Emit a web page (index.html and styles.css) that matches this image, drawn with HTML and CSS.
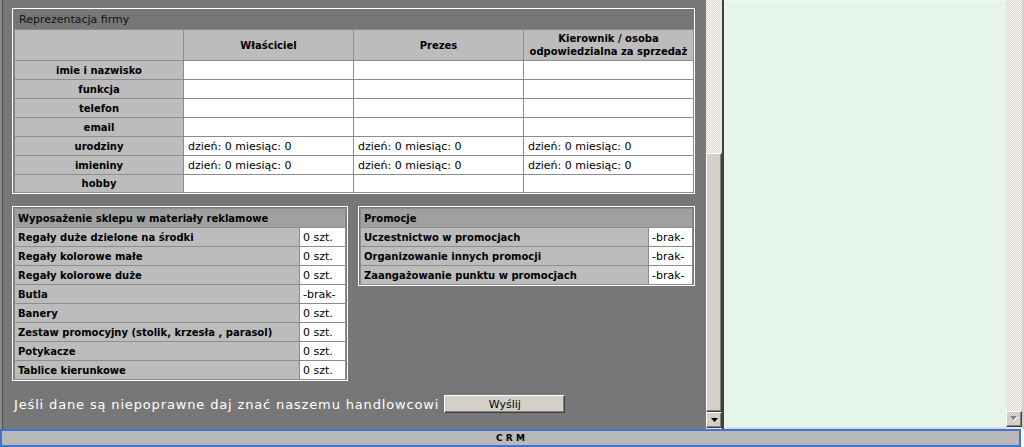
FILE: index.html
```html
<!DOCTYPE html>
<html lang="pl">
<head>
<meta charset="utf-8">
<title>CRM</title>
<link rel="stylesheet" href="styles.css">
</head>
<body>
<div class="screen">
  <div class="frames">
    <div class="left-frame">
      <div class="box box-rep">
        <div class="box-title">Reprezentacja firmy</div>
        <table class="grid rep">
          <colgroup><col class="c-label"><col class="c-data"><col class="c-data"><col class="c-data"></colgroup>
          <tr class="head-row"><th></th><th>Właściciel</th><th>Prezes</th><th>Kierownik / osoba<br>odpowiedzialna za sprzedaż</th></tr>
          <tr><th>imie i nazwisko</th><td></td><td></td><td></td></tr>
          <tr><th>funkcja</th><td></td><td></td><td></td></tr>
          <tr><th>telefon</th><td></td><td></td><td></td></tr>
          <tr><th>email</th><td></td><td></td><td></td></tr>
          <tr><th>urodziny</th><td>dzień: 0 miesiąc: 0</td><td>dzień: 0 miesiąc: 0</td><td>dzień: 0 miesiąc: 0</td></tr>
          <tr><th>imieniny</th><td>dzień: 0 miesiąc: 0</td><td>dzień: 0 miesiąc: 0</td><td>dzień: 0 miesiąc: 0</td></tr>
          <tr class="last-row"><th>hobby</th><td></td><td></td><td></td></tr>
        </table>
      </div>
      <div class="box-row">
        <div class="box box-equip">
          <table class="grid small">
            <colgroup><col><col class="c-val-equip"></colgroup>
            <tr class="cap-row"><th colspan="2">Wyposażenie sklepu w materiały reklamowe</th></tr>
            <tr><th>Regały duże dzielone na środki</th><td class="val">0 szt.</td></tr>
            <tr><th>Regały kolorowe małe</th><td class="val">0 szt.</td></tr>
            <tr><th>Regały kolorowe duże</th><td class="val">0 szt.</td></tr>
            <tr><th>Butla</th><td class="val">-brak-</td></tr>
            <tr><th>Banery</th><td class="val">0 szt.</td></tr>
            <tr><th>Zestaw promocyjny (stolik, krzesła , parasol)</th><td class="val">0 szt.</td></tr>
            <tr><th>Potykacze</th><td class="val">0 szt.</td></tr>
            <tr><th>Tablice kierunkowe</th><td class="val">0 szt.</td></tr>
          </table>
        </div>
        <div class="box box-promo">
          <table class="grid small">
            <colgroup><col><col class="c-val-promo"></colgroup>
            <tr class="cap-row"><th colspan="2">Promocje</th></tr>
            <tr><th>Uczestnictwo w promocjach</th><td class="val">-brak-</td></tr>
            <tr><th>Organizowanie innych promocji</th><td class="val">-brak-</td></tr>
            <tr><th>Zaangażowanie punktu w promocjach</th><td class="val">-brak-</td></tr>
          </table>
        </div>
      </div>
      <div class="notice">
        <span class="notice-text">Jeśli dane są niepoprawne daj znać naszemu handlowcowi</span>
        <button class="btn" type="button">Wyślij</button>
      </div>
    </div>
    <div class="vscroll">
      <div class="track track-top"></div>
      <div class="thumb"></div>
      <div class="arrow-btn"><svg width="7" height="4" viewBox="0 0 7 4"><path d="M0 0h7L3.5 4z" fill="#000"/></svg></div>
      <div class="track-end"></div>
    </div>
    <div class="frame-edge"></div>
    <div class="green-frame"></div>
    <div class="vscroll vscroll-right">
      <div class="track track-fill"></div>
      <div class="arrow-btn arrow-disabled"><svg width="9" height="6" viewBox="0 0 9 6"><path d="M1 1h7L4.5 5z" fill="#fff"/><path d="M0 0h7L3.5 4z" fill="#808080"/></svg></div>
      <div class="track-end"></div>
    </div>
    <div class="right-edge"></div>
  </div>
  <div class="crm-bar">C R M</div>
</div>
</body>
</html>
```
FILE: styles.css
```css
* { box-sizing: border-box; }
html, body { margin: 0; padding: 0; }
body {
  width: 1024px;
  height: 447px;
  overflow: hidden;
  background: #ffffff;
  font-family: "DejaVu Sans", Verdana, sans-serif;
  font-size: 11px;
  color: #000;
}
.screen { width: 1024px; height: 447px; display: flex; flex-direction: column; }
.frames { display: flex; height: 429px; }

.left-frame {
  width: 706px;
  height: 429px;
  background: #777777;
  border-left: 2px solid #8a8a8a;
  box-shadow: inset 1px 0 0 #505050;
  padding: 8px 0 0 10px;
}

.box {
  border: 1px solid #ffffff;
  padding: 1px 1px 0 1px;
}
.box-rep { width: 683px; padding-top: 0; }
.box-title {
  height: 20px;
  line-height: 22px;
  padding-left: 5px;
  color: #111;
  font-size: 11px;
}

.grid {
  border-collapse: collapse;
  table-layout: fixed;
  width: 100%;
}
.grid th, .grid td {
  border: 1px solid #8c8c8c;
  padding: 0;
  height: 19px;
  overflow: hidden;
  white-space: nowrap;
}
.grid th {
  background: #bcbcbc;
  font-size: 10px;
  font-weight: bold;
}
.grid td { background: #ffffff; }

.rep .c-label { width: 169px; }
.rep .c-data { width: 170px; }
.rep th { text-align: center; }
.rep td { padding-left: 4px; font-size: 11px; }
.rep .head-row th { height: 31px; line-height: 13px; }
.rep .last-row th, .rep .last-row td { height: 18px; }

.box-row { display: flex; gap: 10px; margin-top: 12px; align-items: flex-start; }
.box-equip { width: 336px; }
.box-promo { width: 337px; }
.c-val-equip { width: 46px; }
.c-val-promo { width: 44px; }
.small th { text-align: left; padding-left: 3px; }
.small .cap-row th { background: #a0a0a0; }
.small .val { padding-left: 3px; font-size: 11px; }

.notice {
  display: flex;
  align-items: center;
  margin-top: 14px;
  padding-left: 2px;
}
.notice-text {
  color: #ffffff;
  font-size: 13px;
  letter-spacing: 0.85px;
}
.btn {
  margin-left: 5px;
  width: 121px;
  height: 18px;
  padding: 0;
  background: #d4d0c8;
  border: 1px solid;
  border-color: #ffffff #404040 #404040 #ffffff;
  box-shadow: inset -1px -1px 0 #808080;
  font-family: "DejaVu Sans", Verdana, sans-serif;
  font-size: 11px;
  color: #000;
}

.vscroll {
  width: 16px;
  height: 429px;
  display: flex;
  flex-direction: column;
}
.track, .track-end {
  background-color: #ffffff;
  background-image: repeating-conic-gradient(#d4d0c8 0 25%, #ffffff 0 50%);
  background-size: 2px 2px;
}
.track-top { height: 153px; }
.track-fill { flex: 1; }
.track-end { height: 1px; }
.thumb {
  height: 259px;
  background: #d4d0c8;
  border: 1px solid;
  border-color: #ffffff #404040 #404040 #ffffff;
  box-shadow: inset -1px -1px 0 #808080;
}
.arrow-btn {
  height: 16px;
  background: #d4d0c8;
  border: 1px solid;
  border-color: #ffffff #404040 #404040 #ffffff;
  box-shadow: inset -1px -1px 0 #808080;
  display: flex;
  align-items: center;
  justify-content: center;
}
.vscroll-right .track-end { height: 2px; }

.frame-edge {
  width: 2px;
  height: 429px;
  background: #404040;
}
.green-frame {
  width: 282px;
  height: 429px;
  background: #e6f5ec;
  border-top: 1px solid #eef9f2;
  border-bottom: 2px solid #d9dcd9;
}
.right-edge {
  width: 2px;
  height: 429px;
  background: #d4d0c8;
}

.crm-bar {
  width: 1021px;
  height: 18px;
  border: 2px solid #3e74d9;
  background: #b9b9b9;
  text-align: center;
  font-size: 9px;
  font-weight: bold;
  line-height: 14px;
  color: #000;
}
```
